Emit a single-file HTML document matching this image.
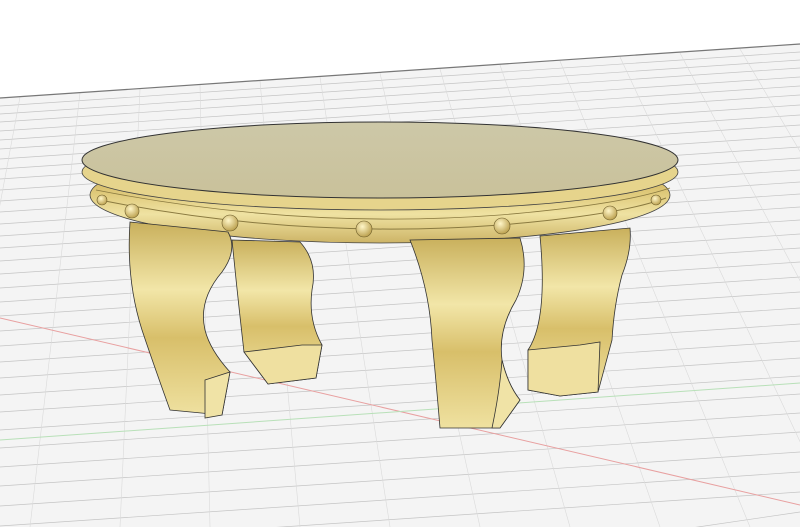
<!DOCTYPE html>
<html><head><style>html,body{margin:0;padding:0;background:#fff;width:800px;height:527px;overflow:hidden}svg{display:block}</style></head>
<body>
<svg width="800" height="527" viewBox="0 0 800 527" xmlns="http://www.w3.org/2000/svg">
<defs>
<linearGradient id="leg" x1="0" y1="0" x2="0" y2="1">
<stop offset="0" stop-color="#c9b05c"/><stop offset="0.35" stop-color="#f2e6a8"/><stop offset="0.6" stop-color="#d8bf6a"/><stop offset="1" stop-color="#efe1a0"/></linearGradient>
<linearGradient id="side" x1="0" y1="0" x2="1" y2="0">
<stop offset="0" stop-color="#f3e8b0"/><stop offset="1" stop-color="#d6c27a"/></linearGradient>
<linearGradient id="rim" x1="0" y1="0" x2="0" y2="1">
<stop offset="0" stop-color="#f2e6ad"/><stop offset="0.4" stop-color="#d9c06c"/><stop offset="0.7" stop-color="#efe2a2"/><stop offset="1" stop-color="#cdb466"/></linearGradient>
<linearGradient id="top" x1="0" y1="0" x2="0" y2="1">
<stop offset="0" stop-color="#cdc8a8"/><stop offset="1" stop-color="#c9c19a"/></linearGradient>
<radialGradient id="bead" cx="0.4" cy="0.35" r="0.7"><stop offset="0" stop-color="#fff6c8"/><stop offset="1" stop-color="#b89c48"/></radialGradient>
</defs>
<polygon points="0,98 800,44 800,527 0,527" fill="#f4f4f4"/>
<g stroke="#c4c4c4" stroke-width="0.7">
<path d="M0 106 L800 52 M0 114 L800 60 M0 122 L800 68 M0 131 L800 77 M0 140 L800 86 M0 149 L800 95 M0 159 L800 105 M0 169 L800 115 M0 179 L800 125 M0 190 L800 136 M0 201 L800 147 M0 212 L800 158 M0 224 L800 170 M0 236 L800 182 M0 248 L800 194 M0 261 L800 207 M0 274 L800 220 M0 288 L800 234 M0 302 L800 248 M0 316 L800 262 M0 331 L800 277 M0 346 L800 292 M0 362 L800 308 M0 378 L800 324 M0 395 L800 341 M0 412 L800 358 M0 430 L800 376 M0 448 L800 394 M0 467 L800 413 M0 486 L800 432 M0 506 L800 452 M0 526 L800 472 M0 546 L800 492 M200 600 L800 512"/>
</g>
<g stroke="#dadada" stroke-width="0.6">
<path d="M20 97 L-60 527 M80 93 L30 527 M140 89 L120 527 M200 85 L210 527 M260 81 L300 527 M320 77 L390 527 M380 73 L480 527 M440 69 L570 527 M500 65 L660 527 M560 61 L750 527 M620 57 L840 527 M680 53 L930 527 M740 49 L1020 527"/>
</g>
<line x1="0" y1="98" x2="800" y2="44" stroke="#777" stroke-width="1.2"/>
<line x1="0" y1="318" x2="800" y2="505" stroke="#e8a0a0" stroke-width="1"/>
<line x1="0" y1="440" x2="800" y2="383" stroke="#b8e0b8" stroke-width="1"/>
<path d="M232 240 L300 242 Q318 262 312 290 Q308 320 322 345 L316 378 L268 384 L244 352 Q238 300 232 240 Z" fill="url(#leg)" stroke="#333" stroke-width="0.8"/>
<path d="M244 352 L302 345 L322 345 L316 378 L268 384 Z" fill="#efe0a0" stroke="#333" stroke-width="0.8"/>
<path d="M540 236 L630 228 Q632 250 622 275 Q614 305 612 340 L598 392 L560 396 L528 390 L528 350 Q548 320 540 236 Z" fill="url(#leg)" stroke="#333" stroke-width="0.8"/>
<path d="M528 350 L580 345 L600 342 L598 392 L560 396 L528 390 Z" fill="#efe0a0" stroke="#333" stroke-width="0.8"/>
<!-- apron -->
<ellipse cx="380" cy="195" rx="290" ry="48" fill="url(#rim)" stroke="#444" stroke-width="0.8"/>
<path d="M100 200 Q300 240 500 225 Q620 215 666 198" fill="none" stroke="#8a7a40" stroke-width="1"/>
<path d="M96 190 Q300 230 500 215 Q620 205 670 188" fill="none" stroke="#8a7a40" stroke-width="0.8"/>
<path d="M130 222 L228 232 Q238 250 222 272 Q198 300 205 330 Q210 350 230 372 L222 415 L170 410 Q152 360 142 330 Q126 280 130 222 Z" fill="url(#leg)" stroke="#333" stroke-width="0.8"/>
<path d="M205 380 L230 372 L222 415 L205 418 Z" fill="#f0e3a6" stroke="#333" stroke-width="0.8"/>
<path d="M410 240 L520 238 Q530 270 516 300 Q498 330 502 360 Q508 385 520 400 L500 428 L440 428 Q436 380 432 340 Q430 290 410 240 Z" fill="url(#leg)" stroke="#333" stroke-width="0.8"/>
<path d="M502 360 Q508 385 520 400 L500 428 L492 428 Q500 390 502 360 Z" fill="#f0e3a6" stroke="#333" stroke-width="0.8"/>
<g fill="url(#bead)" stroke="#6a5a28" stroke-width="0.6">
<circle cx="102" cy="200" r="5"/><circle cx="132" cy="211" r="7"/><circle cx="230" cy="223" r="8"/><circle cx="364" cy="229" r="8"/><circle cx="502" cy="226" r="8"/><circle cx="610" cy="213" r="7"/><circle cx="656" cy="200" r="5"/>
</g>
<ellipse cx="380" cy="172" rx="298" ry="38" fill="#e6d48c" stroke="#444" stroke-width="0.8"/>
<ellipse cx="380" cy="160" rx="298" ry="38" fill="url(#top)" stroke="#333" stroke-width="1"/>
</svg>
</body></html>
